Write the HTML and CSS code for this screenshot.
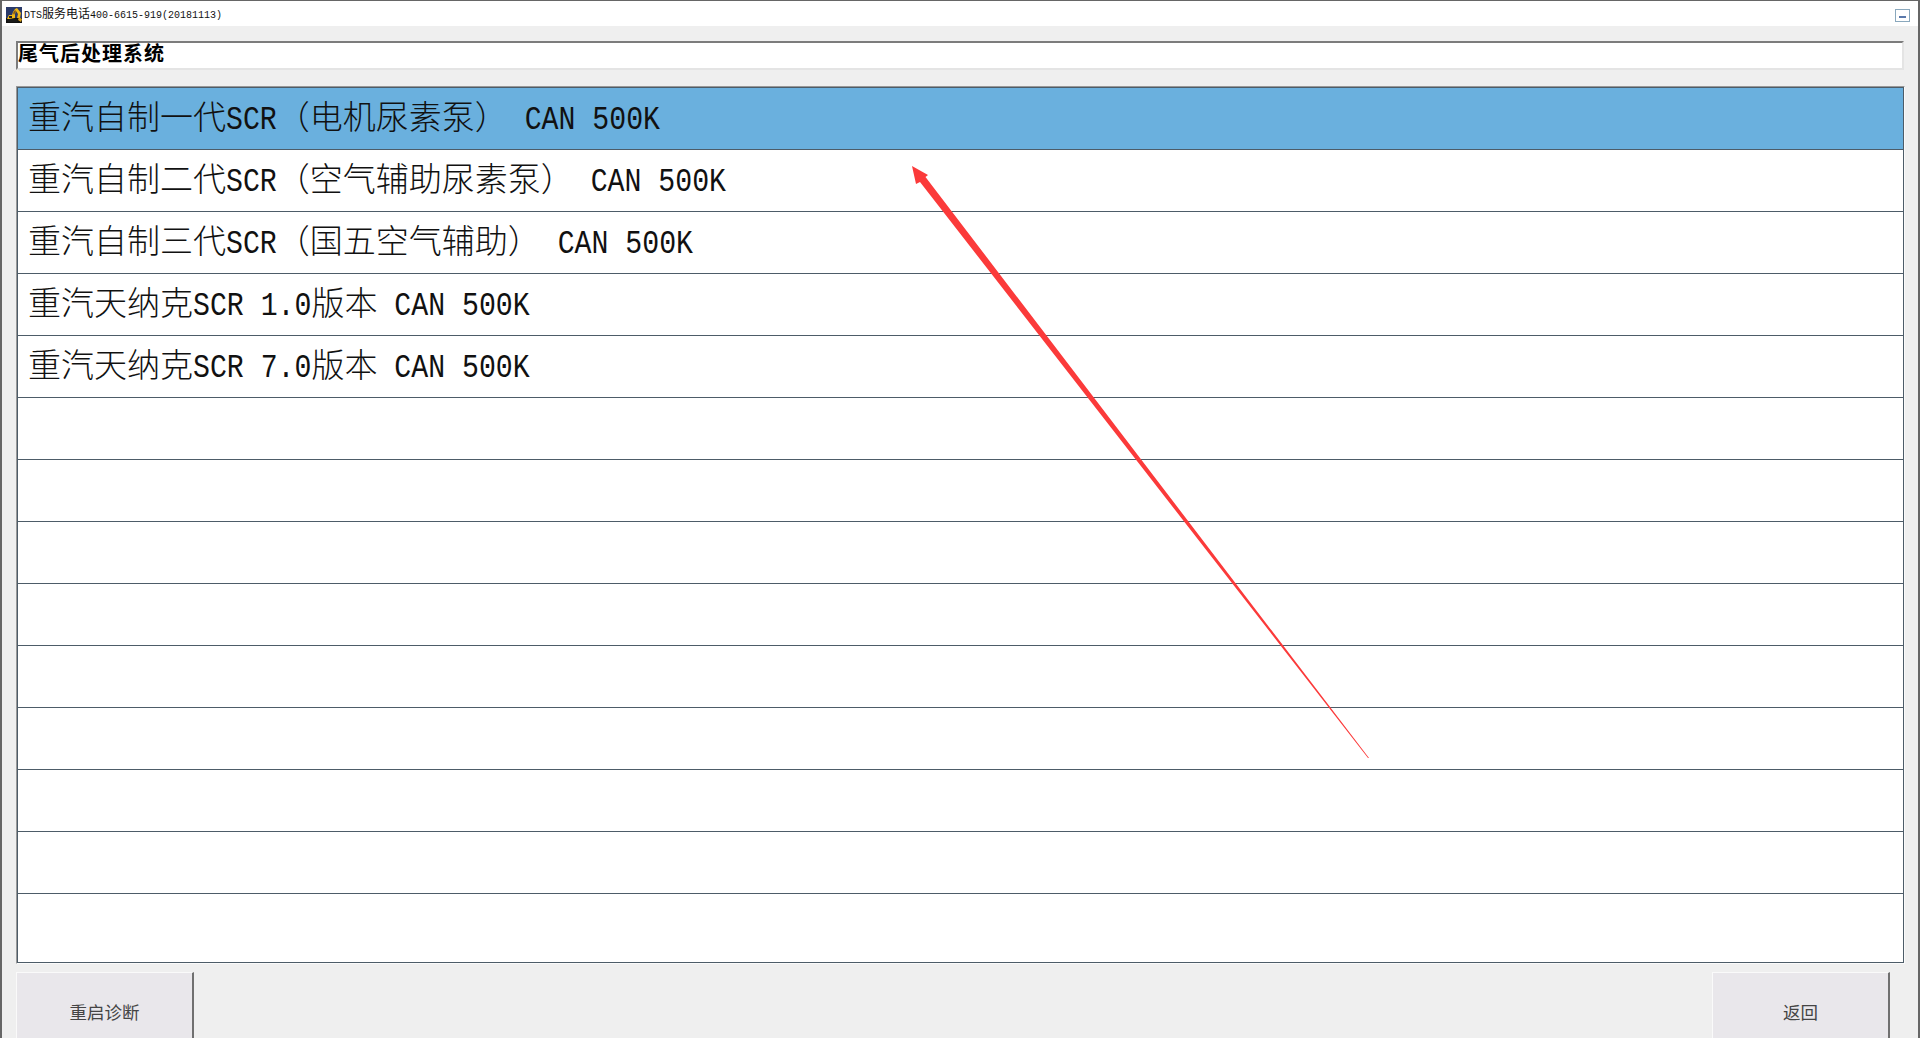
FILE: index.html
```html
<!DOCTYPE html>
<html lang="zh-CN">
<head>
<meta charset="utf-8">
<title>DTS</title>
<link rel="stylesheet" href="styles.css">
</head>
<body>
<div class="window">
  <header class="titlebar">
    <svg class="app-icon" viewBox="0 0 16 16" width="16" height="16" aria-hidden="true">
      <rect width="16" height="16" fill="#2a3a6a"/>
      <rect y="11" width="16" height="5" fill="#111"/>
      <path d="M1 12 L3 8 L6 8 L7 5 L9 2 L11 1 L15 6 L14 11 L11 11 L12 7 L10 4 L9 7 L9 11 L3 12 Z" fill="#f0b818"/>
      <path d="M7 6 L9 3 L10 4 L8 8 Z" fill="#8a5a10"/>
      <path d="M2 12 H11 L12 14 L11 15 H2 L1 14 Z" fill="#1a1a1a"/>
      <path d="M13 10 L16 12 L15 15 L12 13 Z" fill="#d8a018"/>
      <rect x="3" y="9" width="3" height="2" fill="#222"/>
    </svg>
    <span class="title-text"><span class="m">DTS</span>服务电话<span class="m">400-6615-919(20181113)</span></span>
    <button class="min-btn" type="button" aria-label="最小化"><span class="min-dash"></span></button>
  </header>
  <main class="content">
    <div class="heading">尾气后处理系统</div>
    <div class="list-frame">
      <ul class="list">
        <li class="row selected">重汽自制一代<span class="lat">SCR</span>（电机尿素泵）<span class="lat"> CAN 500K</span></li>
        <li class="row">重汽自制二代<span class="lat">SCR</span>（空气辅助尿素泵）<span class="lat"> CAN 500K</span></li>
        <li class="row">重汽自制三代<span class="lat">SCR</span>（国五空气辅助）<span class="lat"> CAN 500K</span></li>
        <li class="row">重汽天纳克<span class="lat">SCR 1.0</span>版本<span class="lat"> CAN 500K</span></li>
        <li class="row">重汽天纳克<span class="lat">SCR 7.0</span>版本<span class="lat"> CAN 500K</span></li>
        <li class="row"></li>
        <li class="row"></li>
        <li class="row"></li>
        <li class="row"></li>
        <li class="row"></li>
        <li class="row"></li>
        <li class="row"></li>
        <li class="row"></li>
        <li class="row last"></li>
      </ul>
    </div>
    <footer class="actions">
      <button class="action" type="button">重启诊断</button>
      <button class="action" type="button">返回</button>
    </footer>
  </main>
  <svg class="arrow" viewBox="0 0 1920 1038" width="1920" height="1038" aria-hidden="true">
    <polygon points="912,166 928,175 925.5,177 1369,758 1368,758 920,182 916,184" fill="#fb3a3a"/>
  </svg>
</div>
</body>
</html>
```
FILE: styles.css
```css
* { box-sizing: border-box; }
html, body { margin: 0; padding: 0; height: 100%; overflow: hidden; }
body { background: #efefef; font-family: "Noto Sans CJK SC", "Liberation Sans", sans-serif; color: #000; }

.window {
  position: relative;
  width: 1920px;
  height: 1038px;
  overflow: hidden;
  background: #efefef;
  border-top: 1px solid #666;
  border-left: 2px solid #666;
  border-right: 2px solid #666;
}

.titlebar {
  display: flex;
  align-items: center;
  height: 25px;
  padding: 0 8px 0 4px;
  background: #fff;
}
.app-icon { flex: none; margin-top: 3px; }
.title-text { margin: 1px 0 0 2px; font-size: 12px; line-height: 16px; white-space: pre; color: #111; }
.title-text .m {
  display: inline-block;
  font-family: "Liberation Mono", monospace;
  font-size: 10px;
  font-weight: 400;
  transform: scaleY(1.15);
}
.min-btn {
  display: flex;
  align-items: flex-end;
  justify-content: center;
  width: 15px;
  height: 13px;
  margin: 3px 0 0 auto;
  padding: 0 0 3px;
  background: #fff;
  border: 1px solid #8aa8bd;
}
.min-dash { display: block; width: 7px; height: 2px; background: #5a78ab; }

.content { display: flex; flex-direction: column; padding: 15px 13px 0 14px; }

.heading {
  height: 29px;
  margin-right: 1px;
  padding-left: 0;
  background: #fff;
  border-top: 2px solid #7c7c7c;
  border-left: 2px solid #7c7c7c;
  border-right: 2px solid #e4e4e4;
  border-bottom: 2px solid #e4e4e4;
  font-size: 20px;
  line-height: 19px;
  font-weight: 700;
  letter-spacing: 1px;
  white-space: nowrap;
}

.list-frame {
  height: 878px;
  margin-top: 16px;
  border: 1px solid #fafafa;
  border-top-color: #989898;
  border-left-color: #989898;
}
.list {
  display: flex;
  flex-direction: column;
  height: 100%;
  margin: 0;
  padding: 0;
  list-style: none;
  background: #fff;
  border: 1px solid #4d5c68;
}
.row {
  flex: none;
  height: 62px;
  padding: 0 0 0 10px;
  display: block;
  line-height: 54px;
  border-bottom: 1px solid #4d5c68;
  font-size: 33px;
  font-weight: 300;
  white-space: pre;
  color: #111;
}
.row.selected { background: #6ab0de; }
.row.last { flex: 1; border-bottom: 0; }
.lat {
  display: inline-block;
  font-family: "Liberation Mono", monospace;
  font-size: 28.2px;
  font-weight: 400;
  line-height: 1;
  white-space: pre;
  transform: scaleY(1.2);
  transform-origin: 50% 80%;
}

.actions { display: flex; justify-content: space-between; margin-top: 8px; padding-right: 15px; }
.action {
  flex: none;
  width: 178px;
  height: 78px;
  padding: 0;
  background: #e9e7eb;
  border: 0;
  border-top: 1px solid #fafafa;
  border-left: 1px solid #fafafa;
  border-right: 2px solid #707070;
  font-family: inherit;
  font-size: 17.5px;
  color: #444;
}

.arrow { position: absolute; left: -2px; top: -1px; pointer-events: none; }
```
